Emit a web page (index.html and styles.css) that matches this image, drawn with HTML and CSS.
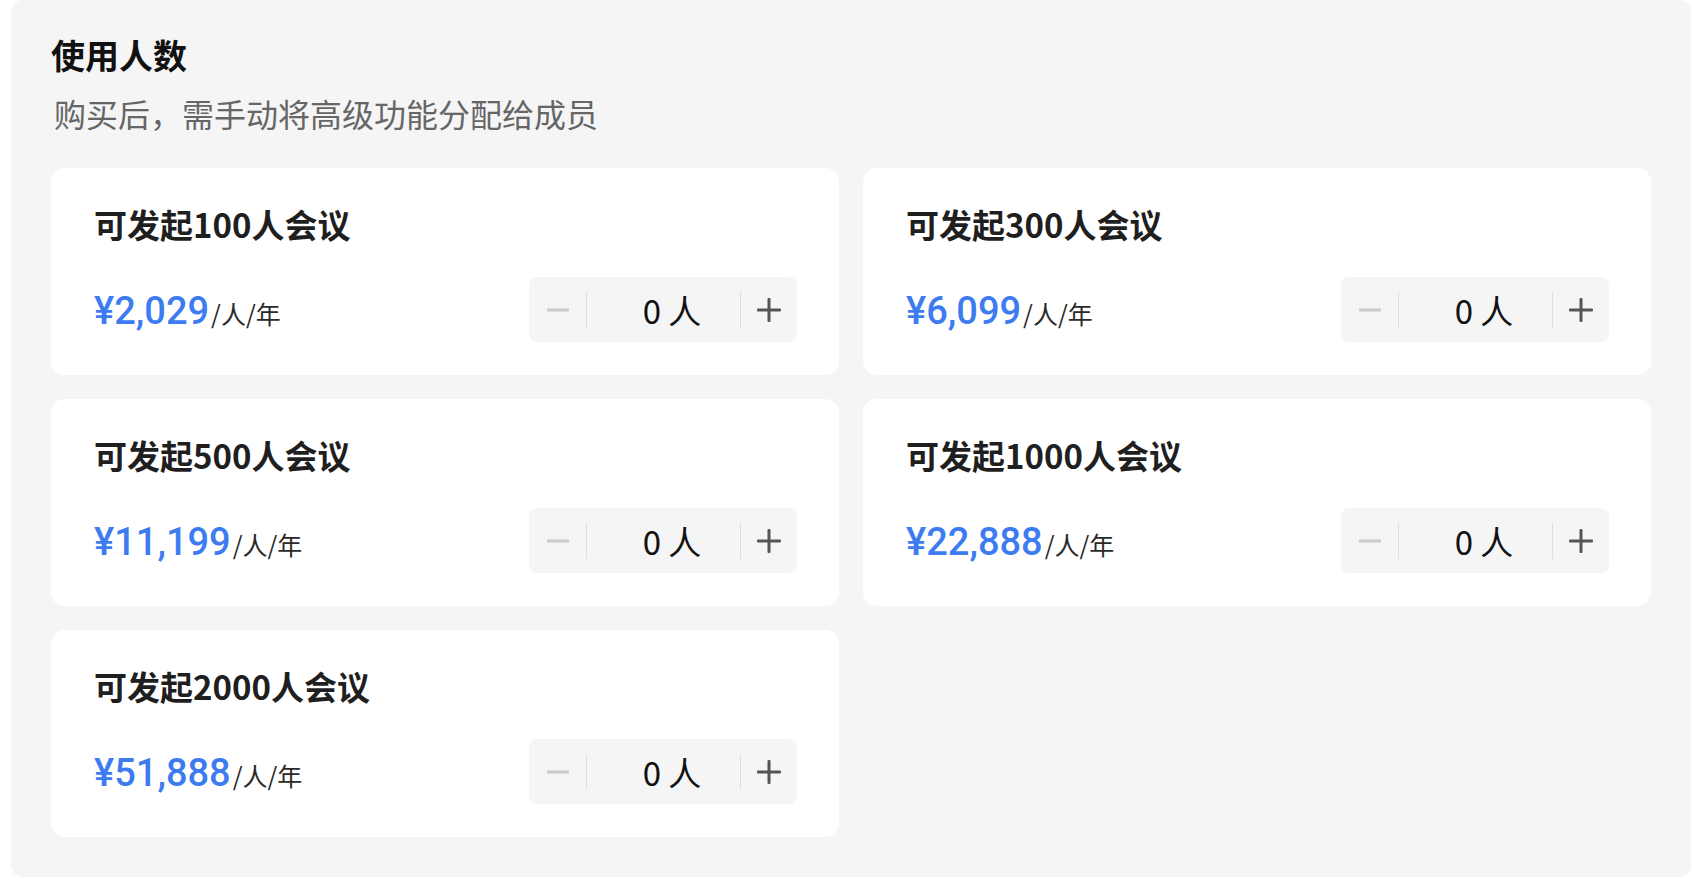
FILE: index.html
```html
<!DOCTYPE html>
<html lang="zh-CN">
<head>
<meta charset="utf-8">
<title>使用人数</title>
<link rel="stylesheet" href="styles.css">
</head>
<body>
<div class="panel">
  <h1 class="title">使用人数</h1>
  <p class="subtitle">购买后，需手动将高级功能分配给成员</p>
  <div class="grid">
    <div class="card">
      <div class="card-title">可发起100人会议</div>
      <div class="row">
        <div class="price"><span class="amount">¥2,029</span><span class="unit">/人/年</span></div>
        <div class="stepper">
          <button class="btn minus" type="button"><svg width="22" height="4" viewBox="0 0 22 4"><rect x="0" y="0.5" width="22" height="3" rx="1" fill="#cacaca"/></svg></button>
          <span class="divider"></span>
          <span class="value">0 人</span>
          <span class="divider"></span>
          <button class="btn plus" type="button"><svg width="24" height="24" viewBox="0 0 24 24"><rect x="0" y="10.5" width="24" height="3" rx="1" fill="#555"/><rect x="10.5" y="0" width="3" height="24" rx="1" fill="#555"/></svg></button>
        </div>
      </div>
    </div>
    <div class="card">
      <div class="card-title">可发起300人会议</div>
      <div class="row">
        <div class="price"><span class="amount">¥6,099</span><span class="unit">/人/年</span></div>
        <div class="stepper">
          <button class="btn minus" type="button"><svg width="22" height="4" viewBox="0 0 22 4"><rect x="0" y="0.5" width="22" height="3" rx="1" fill="#cacaca"/></svg></button>
          <span class="divider"></span>
          <span class="value">0 人</span>
          <span class="divider"></span>
          <button class="btn plus" type="button"><svg width="24" height="24" viewBox="0 0 24 24"><rect x="0" y="10.5" width="24" height="3" rx="1" fill="#555"/><rect x="10.5" y="0" width="3" height="24" rx="1" fill="#555"/></svg></button>
        </div>
      </div>
    </div>
    <div class="card">
      <div class="card-title">可发起500人会议</div>
      <div class="row">
        <div class="price"><span class="amount">¥11,199</span><span class="unit">/人/年</span></div>
        <div class="stepper">
          <button class="btn minus" type="button"><svg width="22" height="4" viewBox="0 0 22 4"><rect x="0" y="0.5" width="22" height="3" rx="1" fill="#cacaca"/></svg></button>
          <span class="divider"></span>
          <span class="value">0 人</span>
          <span class="divider"></span>
          <button class="btn plus" type="button"><svg width="24" height="24" viewBox="0 0 24 24"><rect x="0" y="10.5" width="24" height="3" rx="1" fill="#555"/><rect x="10.5" y="0" width="3" height="24" rx="1" fill="#555"/></svg></button>
        </div>
      </div>
    </div>
    <div class="card">
      <div class="card-title">可发起1000人会议</div>
      <div class="row">
        <div class="price"><span class="amount">¥22,888</span><span class="unit">/人/年</span></div>
        <div class="stepper">
          <button class="btn minus" type="button"><svg width="22" height="4" viewBox="0 0 22 4"><rect x="0" y="0.5" width="22" height="3" rx="1" fill="#cacaca"/></svg></button>
          <span class="divider"></span>
          <span class="value">0 人</span>
          <span class="divider"></span>
          <button class="btn plus" type="button"><svg width="24" height="24" viewBox="0 0 24 24"><rect x="0" y="10.5" width="24" height="3" rx="1" fill="#555"/><rect x="10.5" y="0" width="3" height="24" rx="1" fill="#555"/></svg></button>
        </div>
      </div>
    </div>
    <div class="card">
      <div class="card-title">可发起2000人会议</div>
      <div class="row">
        <div class="price"><span class="amount">¥51,888</span><span class="unit">/人/年</span></div>
        <div class="stepper">
          <button class="btn minus" type="button"><svg width="22" height="4" viewBox="0 0 22 4"><rect x="0" y="0.5" width="22" height="3" rx="1" fill="#cacaca"/></svg></button>
          <span class="divider"></span>
          <span class="value">0 人</span>
          <span class="divider"></span>
          <button class="btn plus" type="button"><svg width="24" height="24" viewBox="0 0 24 24"><rect x="0" y="10.5" width="24" height="3" rx="1" fill="#555"/><rect x="10.5" y="0" width="3" height="24" rx="1" fill="#555"/></svg></button>
        </div>
      </div>
    </div>
  </div>
</div>
</body>
</html>
```
FILE: styles.css
```css
* { box-sizing: border-box; }
html, body { margin: 0; padding: 0; background: #ffffff; }
body {
  font-family: "Noto Sans CJK SC", "Noto Sans", sans-serif;
  color: #1a1a1a;
}
.panel {
  margin-left: 11px;
  width: 1680px;
  background: #f5f5f5;
  border-radius: 12px;
  padding: 31px 40px 40px 40px;
}
.title {
  margin: 0;
  font-size: 34px;
  line-height: 48px;
  font-weight: 700;
  color: #111;
}
.subtitle {
  margin: 11px 0 0 3px;
  font-size: 32px;
  line-height: 46px;
  font-weight: 400;
  color: #666;
}
.grid {
  margin-top: 32px;
  display: grid;
  grid-template-columns: 1fr 1fr;
  gap: 24px;
}
.card {
  background: #ffffff;
  border-radius: 14px;
  padding: 32px 42px 33px 43px;
}
.card-title {
  font-size: 33px;
  line-height: 48px;
  font-weight: 700;
  color: #1f1f1f;
}
.row {
  margin-top: 29px;
  display: flex;
  align-items: center;
  justify-content: space-between;
}
.price {
  padding-top: 8px;
  line-height: 38px;
  white-space: nowrap;
}
.amount {
  font-family: "Roboto", "Noto Sans CJK SC", sans-serif;
  font-size: 38px;
  font-weight: 500;
  color: #3d7cf0;
}
.unit {
  font-size: 25px;
  color: #2a2a2a;
  margin-left: 2px;
}
.stepper {
  width: 268px;
  height: 65px;
  background: #f5f5f5;
  border-radius: 8px;
  display: flex;
  align-items: center;
}
.btn {
  border: 0;
  background: transparent;
  padding: 0;
  height: 100%;
  display: flex;
  align-items: center;
  justify-content: center;
  cursor: pointer;
}
.minus { width: 57px; }
.plus { width: 56px; }
.divider {
  width: 1px;
  height: 36px;
  background: #dedede;
}
.value {
  flex: 1;
  text-align: center;
  padding-left: 17px;
  font-size: 33px;
  line-height: 40px;
  font-weight: 400;
  color: #111;
}
```
